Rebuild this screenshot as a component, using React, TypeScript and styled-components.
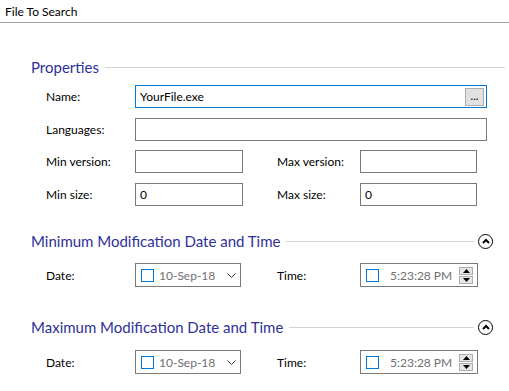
import React from 'react';
import styled, { createGlobalStyle } from 'styled-components';

const GlobalStyle = createGlobalStyle`
  html, body {
    margin: 0;
    padding: 0;
    background: #ffffff;
  }
  body {
    font-family: Lato, "Noto Sans", sans-serif;
    font-size: 12px;
    color: #000000;
  }
`

const Page = styled.div`
  width: 509px;
  height: 391px;
  overflow: hidden;
  display: flex;
  flex-direction: column;
`

const TitleBar = styled.div`
  height: 22px;
  padding-left: 5px;
  display: flex;
  align-items: center;
  border-bottom: 1px solid #a0a0a0;
  font-size: 12px;
`

const Content = styled.div`
  padding: 0 4px 0 31px;
  display: flex;
  flex-direction: column;
`

const SectionHeader = styled.div<{ top: number }>`
  margin-top: ${props => props.top}px;
  height: 20px;
  display: flex;
  align-items: center;
  gap: 6px;
`

const HeaderText = styled.span`
  font-size: 15px;
  color: #30309a;
  white-space: nowrap;
`

const Rule = styled.div`
  flex: 1;
  height: 1px;
  background: #d4d4d4;
`

const CollapseButton = styled.div`
  width: 13px;
  height: 13px;
  margin: 0 12px 0 -2px;
  border: 1.5px solid #000;
  border-radius: 50%;
  display: flex;
  align-items: center;
  justify-content: center;
`

const Row = styled.div<{ top: number }>`
  margin-top: ${props => props.top}px;
  padding-left: 15px;
  display: flex;
  align-items: center;
`

const Label = styled.span<{ width: number }>`
  width: ${props => props.width}px;
  flex-shrink: 0;
  font-size: 12px;
`

const TextBox = styled.div<{ width: number, focused?: boolean }>`
  width: ${props => props.width}px;
  height: 23px;
  box-sizing: border-box;
  border: 1px solid ${props => props.focused ? '#0078d7' : '#7a7a7a'};
  display: flex;
  align-items: center;
  padding: 0 2px 0 4px;
  font-size: 12px;
`

const BoxText = styled.span`
  flex: 1;
`

const BrowseButton = styled.div`
  width: 19px;
  height: 18px;
  box-sizing: border-box;
  background: #e1e1e1;
  border: 1px solid #adadad;
  display: flex;
  align-items: center;
  justify-content: center;
  font-size: 11px;
  line-height: 1;
  padding-bottom: 2px;
`

const Gap = styled.div<{ width: number }>`
  width: ${props => props.width}px;
  flex-shrink: 0;
`

const Picker = styled.div<{ width: number }>`
  width: ${props => props.width}px;
  height: 24px;
  box-sizing: border-box;
  border: 1px solid #7a7a7a;
  display: flex;
  align-items: center;
  padding: 0 4px 0 5px;
`

const Check = styled.div`
  width: 13px;
  height: 13px;
  box-sizing: border-box;
  border: 1px solid #0078d7;
  flex-shrink: 0;
  align-self: flex-start;
  margin-top: 5px;
`

const PickerText = styled.span<{ indent: number }>`
  flex: 1;
  margin-left: ${props => props.indent}px;
  color: #707070;
  font-size: 12px;
`

const Spinner = styled.div`
  width: 14px;
  height: 17px;
  display: flex;
  flex-direction: column;
  gap: 1px;
`

const SpinHalf = styled.div`
  flex: 1;
  background: #e6e6e6;
  border: 1px solid #adadad;
  display: flex;
  align-items: center;
  justify-content: center;
`

const Arrow = ({ up }: { up?: boolean }) => (
  <svg width="7" height="4" viewBox="0 0 7 4">
    <path d={up ? 'M0 4 L3.5 0 L7 4 Z' : 'M0 0 L3.5 4 L7 0 Z'} fill="#000" />
  </svg>
)

const Chevron = () => (
  <svg width="9" height="5" viewBox="0 0 9 5">
    <path d="M0.5 0.5 L4.5 4.5 L8.5 0.5" fill="none" stroke="#333" strokeWidth="1" />
  </svg>
)

const Caret = () => (
  <svg width="8" height="6" viewBox="0 0 8 6">
    <path d="M1 5 L4 2 L7 5" fill="none" stroke="#000" strokeWidth="2" />
  </svg>
)

const DateTimeRow = ({ top }: { top: number }) => (
  <Row top={top}>
    <Label width={89}>Date:</Label>
    <Picker width={106}>
      <Check />
      <PickerText indent={5}>10-Sep-18</PickerText>
      <Chevron />
    </Picker>
    <Gap width={36} />
    <Label width={83}>Time:</Label>
    <Picker width={118}>
      <Check />
      <PickerText indent={11}>5:23:28 PM</PickerText>
      <Spinner>
        <SpinHalf><Arrow up /></SpinHalf>
        <SpinHalf><Arrow /></SpinHalf>
      </Spinner>
    </Picker>
  </Row>
)

const App = () => {
  return (
    <Page>
      <GlobalStyle />
      <TitleBar>File To Search</TitleBar>
      <Content>
        <SectionHeader top={34}>
          <HeaderText>Properties</HeaderText>
          <Rule />
        </SectionHeader>
        <Row top={8}>
          <Label width={89}>Name:</Label>
          <TextBox width={352} focused>
            <BoxText>YourFile.exe</BoxText>
            <BrowseButton>...</BrowseButton>
          </TextBox>
        </Row>
        <Row top={10}>
          <Label width={89}>Languages:</Label>
          <TextBox width={352} />
        </Row>
        <Row top={9}>
          <Label width={89}>Min version:</Label>
          <TextBox width={108} />
          <Gap width={34} />
          <Label width={83}>Max version:</Label>
          <TextBox width={117} />
        </Row>
        <Row top={10}>
          <Label width={89}>Min size:</Label>
          <TextBox width={108}>0</TextBox>
          <Gap width={34} />
          <Label width={83}>Max size:</Label>
          <TextBox width={117}>0</TextBox>
        </Row>
        <SectionHeader top={25}>
          <HeaderText>Minimum Modification Date and Time</HeaderText>
          <Rule />
          <CollapseButton><Caret /></CollapseButton>
        </SectionHeader>
        <DateTimeRow top={12} />
        <SectionHeader top={30}>
          <HeaderText>Maximum Modification Date and Time</HeaderText>
          <Rule />
          <CollapseButton><Caret /></CollapseButton>
        </SectionHeader>
        <DateTimeRow top={13} />
      </Content>
    </Page>
  )
}

export default App;
